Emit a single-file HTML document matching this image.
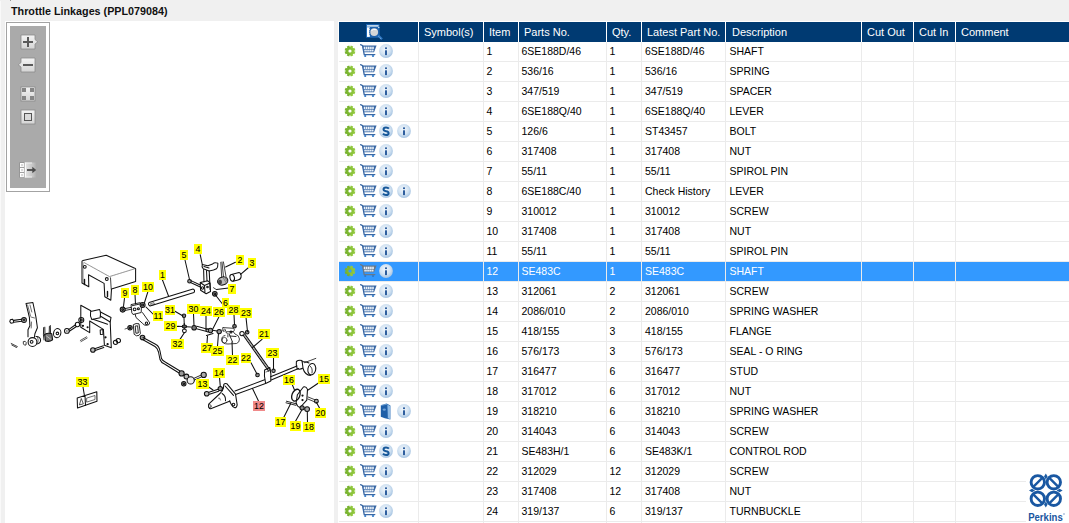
<!DOCTYPE html>
<html><head><meta charset="utf-8">
<style>
*{margin:0;padding:0;box-sizing:border-box}
html,body{width:1069px;height:523px;overflow:hidden;background:#f0f0f0;font-family:"Liberation Sans",sans-serif;position:relative}
.a{position:absolute}
.title{left:11px;top:4px;font-weight:bold;font-size:10.75px;color:#111;line-height:14px;white-space:nowrap}
.panel{left:5px;top:21px;width:329px;height:502px;background:#fff}
.tbox{left:338px;top:21px;width:731px;height:502px;background:#fff}
.hdr{left:339px;top:22px;width:730px;height:20px;background:#003a72}
.ht{top:22px;line-height:20px;font-size:11px;color:#fff;white-space:nowrap}
.vl{top:22px;width:1px;height:501px;background:#ebebeb}
.vh{top:22px;width:1px;height:20px;background:#fff}
.hl{left:339px;width:730px;height:1px;background:#ebebeb}
.dt{line-height:20px;font-size:10.5px;color:#000;white-space:nowrap}
.sel{left:339px;top:262px;width:730px;height:19px;background:#3399ff}
.sel .dt{color:#fff}
</style></head><body>
<svg width="0" height="0" style="position:absolute">
<defs>
<radialGradient id="gi" cx="45%" cy="40%" r="60%"><stop offset="0" stop-color="#f2f7fc"/><stop offset="0.6" stop-color="#d3e3f2"/><stop offset="1" stop-color="#a6c4e2"/></radialGradient>
<linearGradient id="gg" x1="0" y1="0" x2="0" y2="1"><stop offset="0" stop-color="#94ca40"/><stop offset="1" stop-color="#74b02c"/></linearGradient>
<symbol id="gear" viewBox="0 0 12 12">
<g fill="url(#gg)" transform="rotate(22.5 6 6)"><circle cx="6" cy="6" r="4"/>
<rect x="4.7" y="0.7" width="2.6" height="10.6"/>
<rect x="4.7" y="0.7" width="2.6" height="10.6" transform="rotate(45 6 6)"/>
<rect x="4.7" y="0.7" width="2.6" height="10.6" transform="rotate(90 6 6)"/>
<rect x="4.7" y="0.7" width="2.6" height="10.6" transform="rotate(135 6 6)"/>
</g><circle cx="6" cy="6" r="1.6" style="fill:var(--h,#fff)"/>
</symbol>
<symbol id="cart" viewBox="0 0 17 14">
<g fill="none" style="stroke:var(--c,#3a68a4)" stroke-width="1.3" stroke-linecap="round">
<path d="M0.6 0.7 L2.6 1.6 L4.2 10.6 L14.8 10.6"/>
</g>
<path d="M2.2 1.5 L16.6 1.5 L14 8.3 L3.5 8.3 Z" style="fill:var(--c,#3a68a4)"/>
<g fill="#e9f0f8"><rect x="3.8" y="2.7" width="1.6" height="2.3"/><rect x="5.9" y="2.7" width="1.6" height="2.3"/><rect x="8.0" y="2.7" width="1.6" height="2.3"/><rect x="10.1" y="2.7" width="1.6" height="2.3"/><rect x="12.2" y="2.7" width="1.6" height="2.3"/><rect x="4.3" y="5.6" width="1.6" height="1.9"/><rect x="6.2" y="5.6" width="1.6" height="1.9"/><rect x="8.1" y="5.6" width="1.6" height="1.9"/><rect x="10.0" y="5.6" width="1.6" height="1.9"/><rect x="11.9" y="5.6" width="1.6" height="1.9"/></g>
<circle cx="5.2" cy="12" r="1.1" fill="#2f78c8"/><circle cx="13" cy="12" r="1.1" fill="#2f78c8"/>
</symbol>
<symbol id="info" viewBox="0 0 14 14">
<circle cx="7" cy="7" r="6.9" fill="url(#gi)"/>
<rect x="6" y="3.4" width="2" height="1.7" fill="#2e5e9e"/><rect x="6" y="6.3" width="2" height="4.8" fill="#2e5e9e"/>
</symbol>
<symbol id="scirc" viewBox="0 0 14 14">
<circle cx="7" cy="7" r="6.9" fill="url(#gi)"/>
<path d="M9.9 4.6 Q9 3.4 7 3.4 Q4.5 3.4 4.5 5.3 Q4.5 6.9 7 7.2 Q9.6 7.5 9.6 9.2 Q9.6 11 7 11 Q5 11 4 9.7" fill="none" stroke="#17589a" stroke-width="2"/>
</symbol>
<symbol id="book" viewBox="0 0 11 17">
<path d="M0.8 2.2 L6.5 0.6 L10.4 2.6 L10.4 16.4 L4.8 15.2 L0.8 13.8 Z" fill="#2466ae"/>
<path d="M7.2 1.4 L10.2 3 L10.2 16.2 L7.6 15 Z" fill="#8fbbe6"/>
<path d="M1 2.4 L7.2 1.2 L7.6 15 L1 13.6 Z" fill="#1e5fa8"/>
<ellipse cx="4.3" cy="6.6" rx="1.6" ry="1.2" fill="#6e9fd4"/>
<path d="M1 2.4 L7.2 1.2" stroke="#9cc4ea" stroke-width="0.6"/>
</symbol>
</defs></svg>
<div class="a" style="left:0;top:1px;width:1px;height:522px;background:#f9f9f9"></div>
<div class="a" style="left:10px;top:0;width:1px;height:1px;background:#999"></div>
<div class="a title">Throttle Linkages (PPL079084)</div>
<div class="a panel"></div>
<div class="a tbox"></div>
<div class="a hdr"></div>

<div class="a ht" style="left:424px">Symbol(s)</div>
<div class="a ht" style="left:489px">Item</div>
<div class="a ht" style="left:524px">Parts No.</div>
<div class="a ht" style="left:612px">Qty.</div>
<div class="a ht" style="left:647px">Latest Part No.</div>
<div class="a ht" style="left:732px">Description</div>
<div class="a ht" style="left:867px">Cut Out</div>
<div class="a ht" style="left:919px">Cut In</div>
<div class="a ht" style="left:961px">Comment</div>
<svg class="a" style="left:362px;top:22px" width="24" height="20" viewBox="362 22 24 20">
<rect x="366" y="24.1" width="13.6" height="13.6" fill="#1d67b4"/>
<rect x="367" y="25.2" width="11.6" height="1.4" fill="#e8f0f8"/>
<rect x="367" y="27.3" width="2.8" height="9.6" fill="#fff"/>
<path d="M369.8 28 v1 M369.8 30 v1 M369.8 32 v1 M369.8 34 v1" stroke="#1d67b4" stroke-width="0.8"/>
<path d="M378.3 35.4 L382 39.2" stroke="#2f78c4" stroke-width="2.2"/>
<path d="M378.6 36.6 L379.4 37.3 M380.1 38 L380.8 38.6" stroke="#cfe0f0" stroke-width="0.6"/>
<circle cx="374.2" cy="32.1" r="4.9" fill="#1f5ea8"/>
<circle cx="374.2" cy="32.1" r="3.9" fill="#d4d6d8"/>
<path d="M371.5 30.5 Q373.5 28.5 376.5 29.8" stroke="#fff" stroke-width="1" fill="none"/>
<circle cx="378.8" cy="27.6" r="0.7" fill="#fff"/>
</svg>
<div class="a hl" style="top:61px"></div>
<div class="a hl" style="top:81px"></div>
<div class="a hl" style="top:101px"></div>
<div class="a hl" style="top:121px"></div>
<div class="a hl" style="top:141px"></div>
<div class="a hl" style="top:161px"></div>
<div class="a hl" style="top:181px"></div>
<div class="a hl" style="top:201px"></div>
<div class="a hl" style="top:221px"></div>
<div class="a hl" style="top:241px"></div>
<div class="a hl" style="top:261px"></div>
<div class="a hl" style="top:281px"></div>
<div class="a hl" style="top:301px"></div>
<div class="a hl" style="top:321px"></div>
<div class="a hl" style="top:341px"></div>
<div class="a hl" style="top:361px"></div>
<div class="a hl" style="top:381px"></div>
<div class="a hl" style="top:401px"></div>
<div class="a hl" style="top:421px"></div>
<div class="a hl" style="top:441px"></div>
<div class="a hl" style="top:461px"></div>
<div class="a hl" style="top:481px"></div>
<div class="a hl" style="top:501px"></div>
<div class="a hl" style="top:521px"></div>
<div class="a sel"></div>
<div class="a vl" style="left:418px"></div>
<div class="a vl" style="left:483px"></div>
<div class="a vl" style="left:518px"></div>
<div class="a vl" style="left:606px"></div>
<div class="a vl" style="left:641px"></div>
<div class="a vl" style="left:725px"></div>
<div class="a vl" style="left:861px"></div>
<div class="a vl" style="left:913px"></div>
<div class="a vl" style="left:955px"></div>
<div class="a vh" style="left:418px"></div>
<div class="a vh" style="left:483px"></div>
<div class="a vh" style="left:518px"></div>
<div class="a vh" style="left:606px"></div>
<div class="a vh" style="left:641px"></div>
<div class="a vh" style="left:725px"></div>
<div class="a vh" style="left:861px"></div>
<div class="a vh" style="left:913px"></div>
<div class="a vh" style="left:955px"></div>
<div class="a dt" style="left:486.5px;top:41px;color:#000">1</div>
<div class="a dt" style="left:521.5px;top:41px;color:#000">6SE188D/46</div>
<div class="a dt" style="left:609.5px;top:41px;color:#000">1</div>
<div class="a dt" style="left:645px;top:41px;color:#000">6SE188D/46</div>
<div class="a dt" style="left:729.5px;top:41px;color:#000">SHAFT</div>
<svg class="a" style="left:344px;top:45px" width="12" height="12"><use href="#gear"/></svg>
<svg class="a" style="left:359.5px;top:44px" width="17" height="14"><use href="#cart"/></svg>
<svg class="a" style="left:379px;top:44px" width="14" height="14"><use href="#info"/></svg>
<div class="a dt" style="left:486.5px;top:61px;color:#000">2</div>
<div class="a dt" style="left:521.5px;top:61px;color:#000">536/16</div>
<div class="a dt" style="left:609.5px;top:61px;color:#000">1</div>
<div class="a dt" style="left:645px;top:61px;color:#000">536/16</div>
<div class="a dt" style="left:729.5px;top:61px;color:#000">SPRING</div>
<svg class="a" style="left:344px;top:65px" width="12" height="12"><use href="#gear"/></svg>
<svg class="a" style="left:359.5px;top:64px" width="17" height="14"><use href="#cart"/></svg>
<svg class="a" style="left:379px;top:64px" width="14" height="14"><use href="#info"/></svg>
<div class="a dt" style="left:486.5px;top:81px;color:#000">3</div>
<div class="a dt" style="left:521.5px;top:81px;color:#000">347/519</div>
<div class="a dt" style="left:609.5px;top:81px;color:#000">1</div>
<div class="a dt" style="left:645px;top:81px;color:#000">347/519</div>
<div class="a dt" style="left:729.5px;top:81px;color:#000">SPACER</div>
<svg class="a" style="left:344px;top:85px" width="12" height="12"><use href="#gear"/></svg>
<svg class="a" style="left:359.5px;top:84px" width="17" height="14"><use href="#cart"/></svg>
<svg class="a" style="left:379px;top:84px" width="14" height="14"><use href="#info"/></svg>
<div class="a dt" style="left:486.5px;top:101px;color:#000">4</div>
<div class="a dt" style="left:521.5px;top:101px;color:#000">6SE188Q/40</div>
<div class="a dt" style="left:609.5px;top:101px;color:#000">1</div>
<div class="a dt" style="left:645px;top:101px;color:#000">6SE188Q/40</div>
<div class="a dt" style="left:729.5px;top:101px;color:#000">LEVER</div>
<svg class="a" style="left:344px;top:105px" width="12" height="12"><use href="#gear"/></svg>
<svg class="a" style="left:359.5px;top:104px" width="17" height="14"><use href="#cart"/></svg>
<svg class="a" style="left:379px;top:104px" width="14" height="14"><use href="#info"/></svg>
<div class="a dt" style="left:486.5px;top:121px;color:#000">5</div>
<div class="a dt" style="left:521.5px;top:121px;color:#000">126/6</div>
<div class="a dt" style="left:609.5px;top:121px;color:#000">1</div>
<div class="a dt" style="left:645px;top:121px;color:#000">ST43457</div>
<div class="a dt" style="left:729.5px;top:121px;color:#000">BOLT</div>
<svg class="a" style="left:344px;top:125px" width="12" height="12"><use href="#gear"/></svg>
<svg class="a" style="left:359.5px;top:124px" width="17" height="14"><use href="#cart"/></svg>
<svg class="a" style="left:379px;top:124px" width="14" height="14"><use href="#scirc"/></svg>
<svg class="a" style="left:397px;top:124px" width="14" height="14"><use href="#info"/></svg>
<div class="a dt" style="left:486.5px;top:141px;color:#000">6</div>
<div class="a dt" style="left:521.5px;top:141px;color:#000">317408</div>
<div class="a dt" style="left:609.5px;top:141px;color:#000">1</div>
<div class="a dt" style="left:645px;top:141px;color:#000">317408</div>
<div class="a dt" style="left:729.5px;top:141px;color:#000">NUT</div>
<svg class="a" style="left:344px;top:145px" width="12" height="12"><use href="#gear"/></svg>
<svg class="a" style="left:359.5px;top:144px" width="17" height="14"><use href="#cart"/></svg>
<svg class="a" style="left:379px;top:144px" width="14" height="14"><use href="#info"/></svg>
<div class="a dt" style="left:486.5px;top:161px;color:#000">7</div>
<div class="a dt" style="left:521.5px;top:161px;color:#000">55/11</div>
<div class="a dt" style="left:609.5px;top:161px;color:#000">1</div>
<div class="a dt" style="left:645px;top:161px;color:#000">55/11</div>
<div class="a dt" style="left:729.5px;top:161px;color:#000">SPIROL PIN</div>
<svg class="a" style="left:344px;top:165px" width="12" height="12"><use href="#gear"/></svg>
<svg class="a" style="left:359.5px;top:164px" width="17" height="14"><use href="#cart"/></svg>
<svg class="a" style="left:379px;top:164px" width="14" height="14"><use href="#info"/></svg>
<div class="a dt" style="left:486.5px;top:181px;color:#000">8</div>
<div class="a dt" style="left:521.5px;top:181px;color:#000">6SE188C/40</div>
<div class="a dt" style="left:609.5px;top:181px;color:#000">1</div>
<div class="a dt" style="left:645px;top:181px;color:#000">Check History</div>
<div class="a dt" style="left:729.5px;top:181px;color:#000">LEVER</div>
<svg class="a" style="left:344px;top:185px" width="12" height="12"><use href="#gear"/></svg>
<svg class="a" style="left:359.5px;top:184px" width="17" height="14"><use href="#cart"/></svg>
<svg class="a" style="left:379px;top:184px" width="14" height="14"><use href="#scirc"/></svg>
<svg class="a" style="left:397px;top:184px" width="14" height="14"><use href="#info"/></svg>
<div class="a dt" style="left:486.5px;top:201px;color:#000">9</div>
<div class="a dt" style="left:521.5px;top:201px;color:#000">310012</div>
<div class="a dt" style="left:609.5px;top:201px;color:#000">1</div>
<div class="a dt" style="left:645px;top:201px;color:#000">310012</div>
<div class="a dt" style="left:729.5px;top:201px;color:#000">SCREW</div>
<svg class="a" style="left:344px;top:205px" width="12" height="12"><use href="#gear"/></svg>
<svg class="a" style="left:359.5px;top:204px" width="17" height="14"><use href="#cart"/></svg>
<svg class="a" style="left:379px;top:204px" width="14" height="14"><use href="#info"/></svg>
<div class="a dt" style="left:486.5px;top:221px;color:#000">10</div>
<div class="a dt" style="left:521.5px;top:221px;color:#000">317408</div>
<div class="a dt" style="left:609.5px;top:221px;color:#000">1</div>
<div class="a dt" style="left:645px;top:221px;color:#000">317408</div>
<div class="a dt" style="left:729.5px;top:221px;color:#000">NUT</div>
<svg class="a" style="left:344px;top:225px" width="12" height="12"><use href="#gear"/></svg>
<svg class="a" style="left:359.5px;top:224px" width="17" height="14"><use href="#cart"/></svg>
<svg class="a" style="left:379px;top:224px" width="14" height="14"><use href="#info"/></svg>
<div class="a dt" style="left:486.5px;top:241px;color:#000">11</div>
<div class="a dt" style="left:521.5px;top:241px;color:#000">55/11</div>
<div class="a dt" style="left:609.5px;top:241px;color:#000">1</div>
<div class="a dt" style="left:645px;top:241px;color:#000">55/11</div>
<div class="a dt" style="left:729.5px;top:241px;color:#000">SPIROL PIN</div>
<svg class="a" style="left:344px;top:245px" width="12" height="12"><use href="#gear"/></svg>
<svg class="a" style="left:359.5px;top:244px" width="17" height="14"><use href="#cart"/></svg>
<svg class="a" style="left:379px;top:244px" width="14" height="14"><use href="#info"/></svg>
<div class="a dt" style="left:486.5px;top:261px;color:#fff">12</div>
<div class="a dt" style="left:521.5px;top:261px;color:#fff">SE483C</div>
<div class="a dt" style="left:609.5px;top:261px;color:#fff">1</div>
<div class="a dt" style="left:645px;top:261px;color:#fff">SE483C</div>
<div class="a dt" style="left:729.5px;top:261px;color:#fff">SHAFT</div>
<svg class="a" style="left:344px;top:265px;--h:#3399ff;--c:#687888" width="12" height="12"><use href="#gear"/></svg>
<svg class="a" style="left:359.5px;top:264px;--h:#3399ff;--c:#687888" width="17" height="14"><use href="#cart"/></svg>
<svg class="a" style="left:379px;top:264px" width="14" height="14"><use href="#info"/></svg>
<div class="a dt" style="left:486.5px;top:281px;color:#000">13</div>
<div class="a dt" style="left:521.5px;top:281px;color:#000">312061</div>
<div class="a dt" style="left:609.5px;top:281px;color:#000">2</div>
<div class="a dt" style="left:645px;top:281px;color:#000">312061</div>
<div class="a dt" style="left:729.5px;top:281px;color:#000">SCREW</div>
<svg class="a" style="left:344px;top:285px" width="12" height="12"><use href="#gear"/></svg>
<svg class="a" style="left:359.5px;top:284px" width="17" height="14"><use href="#cart"/></svg>
<svg class="a" style="left:379px;top:284px" width="14" height="14"><use href="#info"/></svg>
<div class="a dt" style="left:486.5px;top:301px;color:#000">14</div>
<div class="a dt" style="left:521.5px;top:301px;color:#000">2086/010</div>
<div class="a dt" style="left:609.5px;top:301px;color:#000">2</div>
<div class="a dt" style="left:645px;top:301px;color:#000">2086/010</div>
<div class="a dt" style="left:729.5px;top:301px;color:#000">SPRING WASHER</div>
<svg class="a" style="left:344px;top:305px" width="12" height="12"><use href="#gear"/></svg>
<svg class="a" style="left:359.5px;top:304px" width="17" height="14"><use href="#cart"/></svg>
<svg class="a" style="left:379px;top:304px" width="14" height="14"><use href="#info"/></svg>
<div class="a dt" style="left:486.5px;top:321px;color:#000">15</div>
<div class="a dt" style="left:521.5px;top:321px;color:#000">418/155</div>
<div class="a dt" style="left:609.5px;top:321px;color:#000">3</div>
<div class="a dt" style="left:645px;top:321px;color:#000">418/155</div>
<div class="a dt" style="left:729.5px;top:321px;color:#000">FLANGE</div>
<svg class="a" style="left:344px;top:325px" width="12" height="12"><use href="#gear"/></svg>
<svg class="a" style="left:359.5px;top:324px" width="17" height="14"><use href="#cart"/></svg>
<svg class="a" style="left:379px;top:324px" width="14" height="14"><use href="#info"/></svg>
<div class="a dt" style="left:486.5px;top:341px;color:#000">16</div>
<div class="a dt" style="left:521.5px;top:341px;color:#000">576/173</div>
<div class="a dt" style="left:609.5px;top:341px;color:#000">3</div>
<div class="a dt" style="left:645px;top:341px;color:#000">576/173</div>
<div class="a dt" style="left:729.5px;top:341px;color:#000">SEAL - O RING</div>
<svg class="a" style="left:344px;top:345px" width="12" height="12"><use href="#gear"/></svg>
<svg class="a" style="left:359.5px;top:344px" width="17" height="14"><use href="#cart"/></svg>
<svg class="a" style="left:379px;top:344px" width="14" height="14"><use href="#info"/></svg>
<div class="a dt" style="left:486.5px;top:361px;color:#000">17</div>
<div class="a dt" style="left:521.5px;top:361px;color:#000">316477</div>
<div class="a dt" style="left:609.5px;top:361px;color:#000">6</div>
<div class="a dt" style="left:645px;top:361px;color:#000">316477</div>
<div class="a dt" style="left:729.5px;top:361px;color:#000">STUD</div>
<svg class="a" style="left:344px;top:365px" width="12" height="12"><use href="#gear"/></svg>
<svg class="a" style="left:359.5px;top:364px" width="17" height="14"><use href="#cart"/></svg>
<svg class="a" style="left:379px;top:364px" width="14" height="14"><use href="#info"/></svg>
<div class="a dt" style="left:486.5px;top:381px;color:#000">18</div>
<div class="a dt" style="left:521.5px;top:381px;color:#000">317012</div>
<div class="a dt" style="left:609.5px;top:381px;color:#000">6</div>
<div class="a dt" style="left:645px;top:381px;color:#000">317012</div>
<div class="a dt" style="left:729.5px;top:381px;color:#000">NUT</div>
<svg class="a" style="left:344px;top:385px" width="12" height="12"><use href="#gear"/></svg>
<svg class="a" style="left:359.5px;top:384px" width="17" height="14"><use href="#cart"/></svg>
<svg class="a" style="left:379px;top:384px" width="14" height="14"><use href="#info"/></svg>
<div class="a dt" style="left:486.5px;top:401px;color:#000">19</div>
<div class="a dt" style="left:521.5px;top:401px;color:#000">318210</div>
<div class="a dt" style="left:609.5px;top:401px;color:#000">6</div>
<div class="a dt" style="left:645px;top:401px;color:#000">318210</div>
<div class="a dt" style="left:729.5px;top:401px;color:#000">SPRING WASHER</div>
<svg class="a" style="left:344px;top:405px" width="12" height="12"><use href="#gear"/></svg>
<svg class="a" style="left:359.5px;top:404px" width="17" height="14"><use href="#cart"/></svg>
<svg class="a" style="left:380px;top:403px" width="11" height="17"><use href="#book"/></svg>
<svg class="a" style="left:397px;top:404px" width="14" height="14"><use href="#info"/></svg>
<div class="a dt" style="left:486.5px;top:421px;color:#000">20</div>
<div class="a dt" style="left:521.5px;top:421px;color:#000">314043</div>
<div class="a dt" style="left:609.5px;top:421px;color:#000">6</div>
<div class="a dt" style="left:645px;top:421px;color:#000">314043</div>
<div class="a dt" style="left:729.5px;top:421px;color:#000">SCREW</div>
<svg class="a" style="left:344px;top:425px" width="12" height="12"><use href="#gear"/></svg>
<svg class="a" style="left:359.5px;top:424px" width="17" height="14"><use href="#cart"/></svg>
<svg class="a" style="left:379px;top:424px" width="14" height="14"><use href="#info"/></svg>
<div class="a dt" style="left:486.5px;top:441px;color:#000">21</div>
<div class="a dt" style="left:521.5px;top:441px;color:#000">SE483H/1</div>
<div class="a dt" style="left:609.5px;top:441px;color:#000">6</div>
<div class="a dt" style="left:645px;top:441px;color:#000">SE483K/1</div>
<div class="a dt" style="left:729.5px;top:441px;color:#000">CONTROL ROD</div>
<svg class="a" style="left:344px;top:445px" width="12" height="12"><use href="#gear"/></svg>
<svg class="a" style="left:359.5px;top:444px" width="17" height="14"><use href="#cart"/></svg>
<svg class="a" style="left:379px;top:444px" width="14" height="14"><use href="#scirc"/></svg>
<svg class="a" style="left:397px;top:444px" width="14" height="14"><use href="#info"/></svg>
<div class="a dt" style="left:486.5px;top:461px;color:#000">22</div>
<div class="a dt" style="left:521.5px;top:461px;color:#000">312029</div>
<div class="a dt" style="left:609.5px;top:461px;color:#000">12</div>
<div class="a dt" style="left:645px;top:461px;color:#000">312029</div>
<div class="a dt" style="left:729.5px;top:461px;color:#000">SCREW</div>
<svg class="a" style="left:344px;top:465px" width="12" height="12"><use href="#gear"/></svg>
<svg class="a" style="left:359.5px;top:464px" width="17" height="14"><use href="#cart"/></svg>
<svg class="a" style="left:379px;top:464px" width="14" height="14"><use href="#info"/></svg>
<div class="a dt" style="left:486.5px;top:481px;color:#000">23</div>
<div class="a dt" style="left:521.5px;top:481px;color:#000">317408</div>
<div class="a dt" style="left:609.5px;top:481px;color:#000">12</div>
<div class="a dt" style="left:645px;top:481px;color:#000">317408</div>
<div class="a dt" style="left:729.5px;top:481px;color:#000">NUT</div>
<svg class="a" style="left:344px;top:485px" width="12" height="12"><use href="#gear"/></svg>
<svg class="a" style="left:359.5px;top:484px" width="17" height="14"><use href="#cart"/></svg>
<svg class="a" style="left:379px;top:484px" width="14" height="14"><use href="#info"/></svg>
<div class="a dt" style="left:486.5px;top:501px;color:#000">24</div>
<div class="a dt" style="left:521.5px;top:501px;color:#000">319/137</div>
<div class="a dt" style="left:609.5px;top:501px;color:#000">6</div>
<div class="a dt" style="left:645px;top:501px;color:#000">319/137</div>
<div class="a dt" style="left:729.5px;top:501px;color:#000">TURNBUCKLE</div>
<svg class="a" style="left:344px;top:505px" width="12" height="12"><use href="#gear"/></svg>
<svg class="a" style="left:359.5px;top:504px" width="17" height="14"><use href="#cart"/></svg>
<svg class="a" style="left:379px;top:504px" width="14" height="14"><use href="#info"/></svg>
<div class="a" style="left:6px;top:22px;width:44px;height:170px;border:1px solid #a3a3a3;background:#fff"></div>
<div class="a" style="left:10px;top:26px;width:36px;height:162px;background:#aaaaaa"></div>
<svg class="a" style="left:10px;top:26px" width="36" height="162" viewBox="10 26 36 162">
<defs>
<linearGradient id="bg1" x1="0" y1="0" x2="0" y2="1"><stop offset="0" stop-color="#f4f4f4"/><stop offset="1" stop-color="#d4d4d4"/></linearGradient>
<linearGradient id="bg2" x1="0" y1="0" x2="1" y2="0"><stop offset="0" stop-color="#e8e8e8"/><stop offset="0.7" stop-color="#c4c4c4"/><stop offset="1" stop-color="#aaaaaa"/></linearGradient>
</defs>
<!-- plus -->
<path d="M21 35 H35 V39.6 L37.8 41.8 L35 44 V49 H21 Z" fill="url(#bg1)" stroke="#8a8a8a" stroke-width="0.8"/>
<rect x="23" y="41" width="10" height="2" fill="#5a5a5a"/><rect x="27" y="37" width="2" height="10" fill="#5a5a5a"/>
<!-- minus -->
<path d="M21 58 H35 V72 H21 V67 L18.2 64.8 L21 62.6 Z" fill="url(#bg1)" stroke="#8a8a8a" stroke-width="0.8"/>
<rect x="23" y="64" width="10" height="2" fill="#5a5a5a"/>
<!-- grid -->
<rect x="21" y="87" width="14" height="14" fill="url(#bg1)" stroke="#8a8a8a" stroke-width="0.8"/>
<rect x="22" y="88" width="4" height="4" fill="#858585"/><rect x="30" y="88" width="4" height="4" fill="#858585"/>
<rect x="22" y="96" width="4" height="4" fill="#858585"/><rect x="30" y="96" width="4" height="4" fill="#858585"/>
<!-- square -->
<rect x="21" y="110" width="14" height="14" fill="url(#bg1)" stroke="#8a8a8a" stroke-width="0.8"/>
<rect x="24.5" y="113.5" width="7" height="7" fill="#dadada" stroke="#555" stroke-width="1"/>
<!-- export -->
<rect x="24.5" y="162.5" width="12" height="15" fill="url(#bg2)"/>
<path d="M25.2 162.8 V177.2" stroke="#fff" stroke-width="1.3"/>
<path d="M25 163 H32 M25 177 H32" stroke="#f4f4f4" stroke-width="0.9"/>
<rect x="19.4" y="162.4" width="5" height="15.2" fill="#8a8a8a"/>
<rect x="20" y="163" width="3.9" height="4.2" fill="#fff"/>
<rect x="20" y="168" width="3.9" height="4.2" fill="#fff"/>
<rect x="20" y="173" width="3.9" height="4.2" fill="#fff"/>
<rect x="21" y="164" width="2" height="2.2" fill="#d8d8d8"/>
<rect x="21" y="169" width="2" height="2.2" fill="#d8d8d8"/>
<rect x="21" y="174" width="2" height="2.2" fill="#d8d8d8"/>
<path d="M27 170 H33" stroke="#4a4a4a" stroke-width="1.8"/>
<path d="M32.3 166.8 L36.2 170 L32.3 173.2 Z" fill="#4a4a4a"/>
</svg>

<svg class="a" style="left:0;top:0" width="334" height="523" viewBox="0 0 334 523">
<g fill="none" stroke="#111" stroke-width="1.05" stroke-linejoin="round" stroke-linecap="round">
<path d="M26 303.5 L32.9 302.5 L35.9 316.9 L37.4 327.8 L34.9 333.8 L34.4 337.3 M26 303.5 L29.4 317.4 L29.9 325.8 L28 329.8 L28 336.8"/>
<path d="M27.6 305 L30.5 316 M30 305 L31.8 312 M31 317 L34.5 318 M31.5 322 L31.2 328" stroke-width="0.6"/>
<circle cx="32.5" cy="342" r="4.4"/><circle cx="31.6" cy="341.8" r="1.4"/>
<path d="M36 336.5 Q40.5 336.5 40.6 340.5 Q40.3 343.5 36.8 344"/><path d="M37.6 337.2 Q38.8 340 37.8 343" stroke-width="0.6"/>
<path d="M10.3 319.8 L12.4 319.2 L13.7 320.8 L13.2 322.8 L11 323.3 L9.8 321.7 Z" fill="#fff"/><path d="M13.7 320.4 L21.8 319.2 M13.8 322.2 L21.8 321.2" stroke-width="1.1"/><circle cx="24" cy="320" r="2.4"/><circle cx="24" cy="320" r="1"/>
<path d="M23.6 341.5 Q25.5 340.5 26.2 342.5 L26 345 Q24.3 345.8 23.6 344.3 Z" stroke-width="0.8"/>
<path d="M11.2 343.5 L17.4 346.6 M11.8 345 L16.5 347.5" stroke-width="0.8" stroke-dasharray="1 0.6"/>
<path d="M44 340 Q43 336 43.6 327.6 M44.8 327.2 L45 335 M50.3 325.5 L50.6 334 M49.4 326.5 L49.2 333" stroke-width="0.9"/>
<path d="M44.6 334.5 Q48 332.6 51.8 333.8 L52.6 339.8 Q49.5 342.2 45.6 341 Z" fill="#777"/><path d="M46.5 336 L50.5 339" stroke="#ddd" stroke-width="0.7"/>
<ellipse cx="57.2" cy="333.1" rx="3.6" ry="4.6" transform="rotate(15 57.2 333.1)"/><circle cx="57.4" cy="333.4" r="1.3"/>
<path d="M82 261.8 Q81.8 260.8 83 260.6 L106.2 255.2 L135.3 268.4 Q136 269 135.6 270 L135.6 281.4 L111.5 289 L110.8 300.2 L104.8 296.8 L104.1 283.4 L88.5 274.7 L88.8 286.8 L82 283 Z"/>
<path d="M84 262.5 L109.5 276.6 L134.6 268.8" stroke="#777" stroke-width="0.8" stroke-dasharray="0.9 0.7"/>
<path d="M110.5 277.8 L111.2 289" stroke-width="0.8"/><path d="M83.3 263 L83.3 282.5" stroke-width="0.5" stroke="#666"/>
<circle cx="84.8" cy="266.8" r="1.4"/><circle cx="106.8" cy="279" r="1.4"/>
<path d="M84.5 279.5 L84.5 284.5 M107.5 291.5 L107.5 296.5" stroke-width="1.4"/>
<path d="M80.8 327.3 L80.8 305.3 L90.8 310.8 M100.2 316 L110.2 322 L111.3 347.8 L104.4 345.2 L103.4 329.4 L89.7 321 L89.7 332.6 L80.8 327.3"/>
<path d="M90.6 311.5 L99.5 309.5 Q101 312 100.2 317.8 L91.8 319.5 Q89.8 316 90.6 311.5 Z"/><path d="M100.5 312 L111 317.5 L110.2 322 M93 319.3 L107.6 324.2"/>
<path d="M100.2 330 L102.9 329.5 L103 334.2 L100.4 334.5 Z"/><circle cx="105.5" cy="337.3" r="0.6" fill="#222"/><circle cx="107.6" cy="344.2" r="0.6" fill="#222"/><circle cx="82.9" cy="325.8" r="0.6" fill="#222"/><circle cx="87.6" cy="327.3" r="0.5" fill="#222"/>
<circle cx="66.9" cy="330.9" r="2.4" fill="#fff"/><circle cx="66.9" cy="330.9" r="1" fill="#888" stroke="none"/><path d="M68.6 329.6 L75.5 324.8 M69.3 331.2 L76.5 326.5"/><circle cx="77.5" cy="324.5" r="2.2"/><circle cx="81.3" cy="320" r="2.5"/><circle cx="81.3" cy="320" r="1"/>
<path d="M80.3 340.5 L86.6 336.8 M81 341.6 L87.2 338" stroke-width="0.7"/>
<circle cx="92.9" cy="350" r="2.3" fill="#bbb"/><path d="M94.6 348.7 L103.4 345.8 M95.1 350.5 L103.8 347.6"/>
<circle cx="115.5" cy="342.3" r="2.1"/><circle cx="118.3" cy="340.6" r="2.2"/>
<circle cx="122.7" cy="309.6" r="2.5" fill="#999"/><circle cx="122.7" cy="309.6" r="0.9"/><path d="M125 308.6 L131 307.4 M125.2 310.4 L131.5 309.2" stroke-width="0.9"/>
<path d="M131.4 304.5 L140 302.7 L141.5 304 L141.2 312.5 L133 314.5 L132 313 Z M132.2 305.7 L140.8 303.8" stroke-width="0.9"/>
<circle cx="134.6" cy="309.3" r="1.4"/><circle cx="138.4" cy="308.8" r="1"/>
<circle cx="142.6" cy="305" r="2.5" fill="#999"/><circle cx="142.6" cy="305" r="1"/>
<path d="M135.2 314.3 L136 317.5 L142.3 323.2 Q144 325.5 146.5 325.4 L149 324.6 Q150.5 322.5 149 321.8 L142.5 312.6" stroke-width="0.9"/><circle cx="146.5" cy="323.3" r="1.2"/>
<path d="M133.6 324.5 Q136 322.8 139 323.8 L140.4 333.6 Q139.5 336 136.5 335.8 L134.5 334.5 Z M135.6 326 L137.6 325.8 L138.3 333 L136.3 333.2 Z" stroke-width="0.9"/>
<circle cx="130" cy="327.8" r="2.2" fill="#999"/><circle cx="130" cy="327.8" r="0.8"/><path d="M125 329 L127 328.3" stroke-width="0.7"/>
<path d="M149.1 302.5 L193 289 M150 306 L194 292.5 M193 289 Q195.5 290 194 292.5 M149.1 302.5 Q147.5 304.5 150 306"/>
<path d="M151 303.5 L154 302.7 L154.5 304.5 L151.5 305.3 Z" stroke-width="0.6"/>
<path d="M203.2 268.8 Q201.5 266.5 202.3 264.5 L207.9 265.8 L212.6 264 Q214 262.5 215.7 262.7 Q218.5 262.8 217.8 264.5 Q218 267.5 216.5 268.8 L213.5 270.1 L209.2 270.9 Z M204 266.5 L209 268"/>
<path d="M203.6 269.6 L204 281.7 M209.2 270.9 L210.1 289.4 M206.5 270.5 L207 281" />
<path d="M200.2 282.5 L207.9 280.8 L210.1 283 L210.5 291.5 L206.2 293.7 L200.6 290.3 Z M200.2 282.5 L204.5 285.5 L210.1 283 M204.5 285.5 L205 293"/><circle cx="202.5" cy="288" r="1.2"/><circle cx="207.5" cy="287" r="0.8"/>
<circle cx="189.5" cy="281.2" r="1.8" fill="#999"/><path d="M191 280.6 L200.2 285 M190.5 282.6 L200.3 287"/>
<path d="M220.8 262.3 L221.7 277.4 M223.4 261.9 L226 276.5 M222 262 L223.5 277" stroke-width="0.8"/>
<ellipse cx="222.7" cy="281" rx="5.2" ry="4" transform="rotate(-15 222.7 281)" fill="#bbb"/><ellipse cx="220" cy="282" rx="2" ry="2.6" fill="#444" stroke="none"/><path d="M223.5 278.2 L226.5 283.5 M225 277.8 L227.5 282" stroke="#555" stroke-width="0.6"/>
<ellipse cx="232.2" cy="277.8" rx="2.2" ry="3.4" transform="rotate(-15 232.2 277.8)"/><path d="M231.5 274.4 L239 272.5 Q241.8 273.5 241 277.5 Q240.5 279.5 238 280 L233 281.2"/>
<circle cx="214.8" cy="293.8" r="2.3" fill="#aaa"/><circle cx="214.8" cy="293.8" r="0.9"/>
<path d="M213.5 287.7 L216.1 289.4" stroke-width="0.8"/>
<circle cx="184" cy="315.8" r="1.7" fill="#888"/><path d="M184 318 L184.3 325" stroke-width="1" stroke-dasharray="1.2 0.6"/>
<path d="M177.6 326.2 L190.7 327 M184.3 323.5 L184.3 329" stroke-width="1.1"/><ellipse cx="184.4" cy="326.4" rx="2.2" ry="1.5" fill="#555"/><circle cx="184.4" cy="330.8" r="1.9"/>
<circle cx="194.1" cy="327.7" r="2.3" fill="#777"/><path d="M197 326.3 L207.5 329.2 M196.6 328.8 L207 331.6" stroke-width="1"/><circle cx="207.6" cy="330.3" r="1.6"/><circle cx="210.4" cy="330.5" r="2.2" fill="#999"/><path d="M212.5 330.3 L217 331" /><circle cx="219.2" cy="331.6" r="2.2" fill="#999"/>
<path d="M206.5 335.5 L213 333.5" stroke-width="1.1"/>
<circle cx="234.5" cy="326.2" r="1.8" fill="#777"/>
<path d="M223 327.6 L233.5 328.3 Q235.5 330 233.5 331.5 L226 331.8 M223 327.6 Q221.2 329.5 223.2 331.5" stroke-width="0.8"/><circle cx="224.5" cy="330.2" r="1" stroke-width="0.6"/>
<path d="M226 332 Q229 334 228 337 M233 331.5 L235 334 Q239 335 239.5 339 Q239.5 342.5 236.5 343.5 L228 344 Q222 344 221.7 340 Q221.5 336 225 335.5" stroke-width="0.8"/><ellipse cx="224.5" cy="340.2" rx="2.5" ry="2.8" stroke-width="0.7"/><path d="M229 333.5 L232.5 342 M230 336 L236 336.5" stroke-width="0.9"/><circle cx="231" cy="332" r="1"/>
<circle cx="242" cy="333.6" r="2.2"/><circle cx="247.2" cy="332.2" r="1.8" fill="#888"/>
<path d="M243 335 L268.5 371 M244.8 334 L270.3 370" stroke-width="1.1"/><path d="M243.9 334.5 L269.4 370.5" stroke="#777" stroke-width="0.8" stroke-dasharray="0.8 0.8"/>
<circle cx="142.5" cy="337.5" r="2.3" fill="#999"/><path d="M143 337.5 L156 344.5 Q159 346 160 351 L161.5 358.5 Q162.5 361 166 362.5 L180 371 M142.5 339.5 L155 346.5 Q157.5 348 158.5 352 L160 359.5 Q161 362.5 164.5 364 L179 373"/>
<circle cx="181.6" cy="373.4" r="2.6" fill="#999"/><circle cx="186.4" cy="376.5" r="2.4" fill="#bbb"/><circle cx="190.7" cy="380.4" r="3.6" fill="#eee"/><path d="M194 378.3 L200.8 375.2 M194.5 380 L201.3 377" stroke-width="0.9"/><circle cx="203.7" cy="374.9" r="2.6" fill="#aaa"/><circle cx="183.8" cy="383.7" r="2.2" fill="#999"/><circle cx="183.8" cy="383.7" r="0.8"/>
<path d="M235 391 L264.6 379.8 M235.6 394.6 L265.5 383.4 M270.6 376.8 L297 366 M271.2 380 L298.5 368.4"/>
<path d="M264.6 370 L269.8 367.5 Q271.5 374 270.8 381 L265.6 383.4 Q263.8 376 264.6 370 Z"/><path d="M266 372 L270 370.5" stroke-width="0.6"/>
<path d="M296.4 361.5 Q298.5 359.6 302 360.5 L303 368 Q300 369.8 297.2 368.8 Q295.8 365 296.4 361.5 Z"/>
<path d="M302 361.8 Q306 361.5 309 363 M303 368.5 Q305 375 310.5 375.5"/><ellipse cx="311.8" cy="369.2" rx="3.9" ry="5.7" transform="rotate(10 311.8 369.2)"/><path d="M310 366 Q313 368 312 373 M304.4 362.7 L315.8 358.4" stroke-width="0.8"/>
<circle cx="257.5" cy="375" r="1.8" fill="#999"/><circle cx="273.5" cy="370.8" r="1.7" fill="#999"/>
<path d="M223.8 384.4 Q225 383 226.8 383.7 L235.5 394.1 L237.2 404.8 Q236.5 408 234.8 407.8 Q232.5 407 231.5 404.8 L229.5 401 M223.4 388 L223.8 384.4 M225.1 386 L233.5 395.4" />
<path d="M220 393.5 L208.7 404.1 Q208 408.5 210.7 408.8 L230.1 401.1 M222.1 393.5 Q226 396 225.5 400.8 M219.5 394 Q223 391 223.4 388" />
<ellipse cx="209.8" cy="406.2" rx="1.3" ry="1.8" stroke-width="0.6"/><circle cx="233.5" cy="404.6" r="1.3"/><path d="M218.5 398 Q220 397 220.5 400" stroke-width="0.6"/>
<circle cx="206.7" cy="393.7" r="2.3" fill="#bbb"/><path d="M209 392.2 L218.1 389.2 M209.5 394.2 L218.6 391.2"/><circle cx="220.3" cy="388.6" r="2.2" fill="#999"/>
<ellipse cx="295.9" cy="395.2" rx="3.9" ry="6.2" transform="rotate(22 295.9 395.2)" stroke-width="1.3"/>
<path d="M303.4 387 Q306 386 307.5 389.4 L306.8 400.1 L300.1 407.5 Q297 406.5 296.1 402.8 L297.4 394.7 Z"/><circle cx="302.5" cy="395.5" r="0.6" fill="#222"/><circle cx="302.5" cy="400" r="0.6" fill="#222"/>
<path d="M308.1 397 L315.5 400 M307.8 399 L315 402" stroke-width="0.8"/><circle cx="316.4" cy="401.2" r="1.9" fill="#aaa"/>
<path d="M286.4 401.2 L296.1 403.8 M286 402.8 L295.8 405.3" stroke-width="0.9"/>
<circle cx="302.1" cy="407.8" r="2.1" fill="#888"/><circle cx="307.1" cy="409.1" r="2.4" fill="#aaa"/>
<path d="M77.2 398 L96.8 391.7 L97 401.3 L77.5 408 Z M85 395.5 L85.5 405.5"/>
<path d="M79.5 404.5 L81.3 398.5 L83.2 403.5 Z" stroke-width="0.7"/><path d="M87 398 L95 395.5 L95 399.5 L87 402 Z" stroke-width="0.6"/>
<path d="M162.5 280 L168.5 296" stroke-width="1.05"/>
<path d="M235.4 262.3 L225.6 267" stroke-width="1.05"/>
<path d="M248 268 L240.6 274.4" stroke-width="1.05"/>
<path d="M200.2 254.7 L202.3 264.5" stroke-width="1.05"/>
<path d="M185 260 L189.5 279.5" stroke-width="1.05"/>
<path d="M224 306 L215.5 295" stroke-width="1.05"/>
<path d="M228.6 288.1 L216.5 289.4" stroke-width="1.05"/>
<path d="M135 294.5 L135.5 304" stroke-width="1.05"/>
<path d="M124.5 298 L123.5 306.5" stroke-width="1.05"/>
<path d="M148 291.4 L144.5 302.5" stroke-width="1.05"/>
<path d="M153 314 L146 307" stroke-width="1.05"/>
<path d="M258.5 401 L252.5 388.5" stroke-width="1.05"/>
<path d="M208.7 387 L213 390" stroke-width="1.05"/>
<path d="M219.5 377.4 L220.3 386.4" stroke-width="1.05"/>
<path d="M318.5 383 L308.1 390" stroke-width="1.05"/>
<path d="M292 384 L294.4 389.7" stroke-width="1.05"/>
<path d="M283.7 417.4 L290.7 403.4" stroke-width="1.05"/>
<path d="M307.5 422.2 L307.3 411.5" stroke-width="1.05"/>
<path d="M295.5 421.3 L301.8 410" stroke-width="1.05"/>
<path d="M319.5 408 L316.5 402.5" stroke-width="1.05"/>
<path d="M262 339.4 L252.5 347.5" stroke-width="1.05"/>
<path d="M232.5 355 L232 342" stroke-width="1.05"/>
<path d="M251 362.8 L257 374" stroke-width="1.05"/>
<path d="M246 317.4 L247.5 331.5" stroke-width="1.05"/>
<path d="M273.5 358 L273.5 369" stroke-width="1.05"/>
<path d="M206 315.4 L206 330" stroke-width="1.05"/>
<path d="M217.5 346 L218.5 333.5" stroke-width="1.05"/>
<path d="M219 316.8 L212.5 329.5" stroke-width="1.05"/>
<path d="M207 343 L207.5 336" stroke-width="1.05"/>
<path d="M234 314.7 L234.5 324.5" stroke-width="1.05"/>
<path d="M177 326.5 L179 326.5" stroke-width="1.05"/>
<path d="M193.5 314.1 L194 325.5" stroke-width="1.05"/>
<path d="M174.5 311 L183 316" stroke-width="1.05"/>
<path d="M180 339.4 L184.5 332.5" stroke-width="1.05"/>
<path d="M83 387 L84.5 396" stroke-width="1.05"/>
</g>
<rect x="159" y="270" width="7" height="10" fill="#ffff00"/>
<text x="162.5" y="278.2" text-anchor="middle" font-family="Liberation Sans" font-size="8.8" fill="#000" stroke="#000" stroke-width="0.08">1</text>
<rect x="236" y="255" width="8" height="10" fill="#ffff00"/>
<text x="240.0" y="263.2" text-anchor="middle" font-family="Liberation Sans" font-size="8.8" fill="#000" stroke="#000" stroke-width="0.08">2</text>
<rect x="248" y="258" width="8" height="10" fill="#ffff00"/>
<text x="252.0" y="266.2" text-anchor="middle" font-family="Liberation Sans" font-size="8.8" fill="#000" stroke="#000" stroke-width="0.08">3</text>
<rect x="194" y="244" width="8" height="10" fill="#ffff00"/>
<text x="198.0" y="252.2" text-anchor="middle" font-family="Liberation Sans" font-size="8.8" fill="#000" stroke="#000" stroke-width="0.08">4</text>
<rect x="180" y="250" width="8" height="10" fill="#ffff00"/>
<text x="184.0" y="258.2" text-anchor="middle" font-family="Liberation Sans" font-size="8.8" fill="#000" stroke="#000" stroke-width="0.08">5</text>
<rect x="222" y="298" width="7" height="10" fill="#ffff00"/>
<text x="225.5" y="306.2" text-anchor="middle" font-family="Liberation Sans" font-size="8.8" fill="#000" stroke="#000" stroke-width="0.08">6</text>
<rect x="228" y="284" width="8" height="10" fill="#ffff00"/>
<text x="232.0" y="292.2" text-anchor="middle" font-family="Liberation Sans" font-size="8.8" fill="#000" stroke="#000" stroke-width="0.08">7</text>
<rect x="131" y="285" width="8" height="10" fill="#ffff00"/>
<text x="135.0" y="293.2" text-anchor="middle" font-family="Liberation Sans" font-size="8.8" fill="#000" stroke="#000" stroke-width="0.08">8</text>
<rect x="121" y="288" width="8" height="10" fill="#ffff00"/>
<text x="125.0" y="296.2" text-anchor="middle" font-family="Liberation Sans" font-size="8.8" fill="#000" stroke="#000" stroke-width="0.08">9</text>
<rect x="142" y="282" width="12" height="10" fill="#ffff00"/>
<text x="148.0" y="290.2" text-anchor="middle" font-family="Liberation Sans" font-size="8.8" fill="#000" stroke="#000" stroke-width="0.08">10</text>
<rect x="153" y="311" width="10" height="10" fill="#ffff00"/>
<text x="158.0" y="319.2" text-anchor="middle" font-family="Liberation Sans" font-size="8.8" fill="#000" stroke="#000" stroke-width="0.08">11</text>
<rect x="253" y="401" width="12" height="10" fill="#f08a8a"/>
<text x="259.0" y="409.2" text-anchor="middle" font-family="Liberation Sans" font-size="8.8" fill="#000" stroke="#000" stroke-width="0.08">12</text>
<rect x="196" y="379" width="13" height="10" fill="#ffff00"/>
<text x="202.5" y="387.2" text-anchor="middle" font-family="Liberation Sans" font-size="8.8" fill="#000" stroke="#000" stroke-width="0.08">13</text>
<rect x="213" y="368" width="12" height="10" fill="#ffff00"/>
<text x="219.0" y="376.2" text-anchor="middle" font-family="Liberation Sans" font-size="8.8" fill="#000" stroke="#000" stroke-width="0.08">14</text>
<rect x="318" y="374" width="12" height="10" fill="#ffff00"/>
<text x="324.0" y="382.2" text-anchor="middle" font-family="Liberation Sans" font-size="8.8" fill="#000" stroke="#000" stroke-width="0.08">15</text>
<rect x="283" y="375" width="12" height="10" fill="#ffff00"/>
<text x="289.0" y="383.2" text-anchor="middle" font-family="Liberation Sans" font-size="8.8" fill="#000" stroke="#000" stroke-width="0.08">16</text>
<rect x="275" y="417" width="11" height="10" fill="#ffff00"/>
<text x="280.5" y="425.2" text-anchor="middle" font-family="Liberation Sans" font-size="8.8" fill="#000" stroke="#000" stroke-width="0.08">17</text>
<rect x="303" y="422" width="12" height="10" fill="#ffff00"/>
<text x="309.0" y="430.2" text-anchor="middle" font-family="Liberation Sans" font-size="8.8" fill="#000" stroke="#000" stroke-width="0.08">18</text>
<rect x="290" y="421" width="11" height="10" fill="#ffff00"/>
<text x="295.5" y="429.2" text-anchor="middle" font-family="Liberation Sans" font-size="8.8" fill="#000" stroke="#000" stroke-width="0.08">19</text>
<rect x="315" y="408" width="11" height="10" fill="#ffff00"/>
<text x="320.5" y="416.2" text-anchor="middle" font-family="Liberation Sans" font-size="8.8" fill="#000" stroke="#000" stroke-width="0.08">20</text>
<rect x="258" y="329" width="12" height="10" fill="#ffff00"/>
<text x="264.0" y="337.2" text-anchor="middle" font-family="Liberation Sans" font-size="8.8" fill="#000" stroke="#000" stroke-width="0.08">21</text>
<rect x="226" y="355" width="13" height="10" fill="#ffff00"/>
<text x="232.5" y="363.2" text-anchor="middle" font-family="Liberation Sans" font-size="8.8" fill="#000" stroke="#000" stroke-width="0.08">22</text>
<rect x="241" y="353" width="10" height="10" fill="#ffff00"/>
<text x="246.0" y="361.2" text-anchor="middle" font-family="Liberation Sans" font-size="8.8" fill="#000" stroke="#000" stroke-width="0.08">22</text>
<rect x="240" y="308" width="12" height="10" fill="#ffff00"/>
<text x="246.0" y="316.2" text-anchor="middle" font-family="Liberation Sans" font-size="8.8" fill="#000" stroke="#000" stroke-width="0.08">23</text>
<rect x="266" y="348" width="13" height="10" fill="#ffff00"/>
<text x="272.5" y="356.2" text-anchor="middle" font-family="Liberation Sans" font-size="8.8" fill="#000" stroke="#000" stroke-width="0.08">23</text>
<rect x="200" y="306" width="12" height="10" fill="#ffff00"/>
<text x="206.0" y="314.2" text-anchor="middle" font-family="Liberation Sans" font-size="8.8" fill="#000" stroke="#000" stroke-width="0.08">24</text>
<rect x="211" y="346" width="13" height="10" fill="#ffff00"/>
<text x="217.5" y="354.2" text-anchor="middle" font-family="Liberation Sans" font-size="8.8" fill="#000" stroke="#000" stroke-width="0.08">25</text>
<rect x="213" y="307" width="12" height="10" fill="#ffff00"/>
<text x="219.0" y="315.2" text-anchor="middle" font-family="Liberation Sans" font-size="8.8" fill="#000" stroke="#000" stroke-width="0.08">26</text>
<rect x="201" y="343" width="12" height="10" fill="#ffff00"/>
<text x="207.0" y="351.2" text-anchor="middle" font-family="Liberation Sans" font-size="8.8" fill="#000" stroke="#000" stroke-width="0.08">27</text>
<rect x="227" y="305" width="13" height="10" fill="#ffff00"/>
<text x="233.5" y="313.2" text-anchor="middle" font-family="Liberation Sans" font-size="8.8" fill="#000" stroke="#000" stroke-width="0.08">28</text>
<rect x="164" y="321" width="13" height="10" fill="#ffff00"/>
<text x="170.5" y="329.2" text-anchor="middle" font-family="Liberation Sans" font-size="8.8" fill="#000" stroke="#000" stroke-width="0.08">29</text>
<rect x="187" y="304" width="13" height="10" fill="#ffff00"/>
<text x="193.5" y="312.2" text-anchor="middle" font-family="Liberation Sans" font-size="8.8" fill="#000" stroke="#000" stroke-width="0.08">30</text>
<rect x="165" y="305" width="10" height="10" fill="#ffff00"/>
<text x="170.0" y="313.2" text-anchor="middle" font-family="Liberation Sans" font-size="8.8" fill="#000" stroke="#000" stroke-width="0.08">31</text>
<rect x="171" y="339" width="13" height="10" fill="#ffff00"/>
<text x="177.5" y="347.2" text-anchor="middle" font-family="Liberation Sans" font-size="8.8" fill="#000" stroke="#000" stroke-width="0.08">32</text>
<rect x="76" y="377" width="13" height="10" fill="#ffff00"/>
<text x="82.5" y="385.2" text-anchor="middle" font-family="Liberation Sans" font-size="8.8" fill="#000" stroke="#000" stroke-width="0.08">33</text>
</svg>
<div class="a" style="left:1026px;top:462px;width:43px;height:61px;background:#fff"></div>
<svg class="a" style="left:1026px;top:470px" width="43" height="53" viewBox="1026 470 43 53">
<g fill="none" stroke="#1a58a2" stroke-width="2.9">
<circle cx="1037.8" cy="482.3" r="6.7"/>
<circle cx="1053.8" cy="482.3" r="6.7"/>
<circle cx="1037.8" cy="498.8" r="6.7"/>
<circle cx="1053.8" cy="498.8" r="6.7"/>
<path d="M1033.3 486.8 L1042.3 477.8 M1049.3 477.8 L1058.3 486.8 M1033.3 494.3 L1042.3 503.3 M1049.3 503.3 L1058.3 494.3" stroke-width="2.4"/>
</g>
<g fill="#1b5ba3">
<path d="M1045.8 473.5 L1047.6 476.5 L1045.8 479.5 L1044 476.5Z"/>
<path d="M1045.8 501.5 L1047.6 504.5 L1045.8 507.5 L1044 504.5Z"/>
<path d="M1029 490.5 L1032 488.7 L1035 490.5 L1032 492.3Z"/>
<path d="M1056.6 490.5 L1059.6 488.7 L1062.6 490.5 L1059.6 492.3Z"/>
</g>
<text x="1028.2" y="520.6" font-family="Liberation Sans" font-weight="bold" font-size="11" fill="#1a56a0" textLength="34.5" lengthAdjust="spacingAndGlyphs">Perkins</text>
<circle cx="1064" cy="514" r="0.8" fill="#7a9ac8"/>
</svg>

</body></html>
